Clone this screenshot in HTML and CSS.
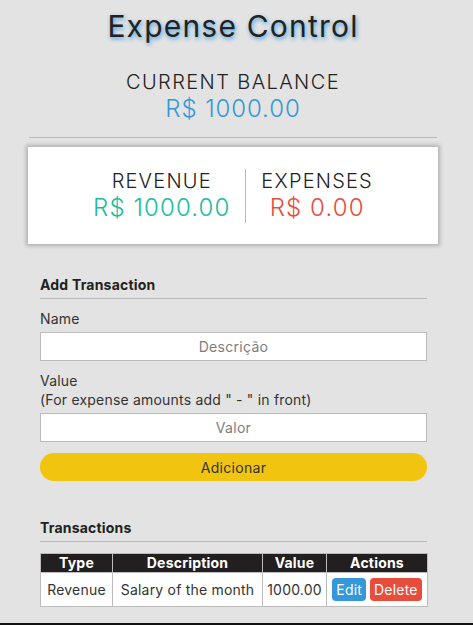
FILE: index.html
```html
<!DOCTYPE html>
<html lang="en">
<head>
<meta charset="utf-8">
<title>Expense Control</title>
<link rel="stylesheet" href="styles.css">
</head>
<body>
<div class="page">
  <h1 class="title">Expense Control</h1>
  <div class="balance">
    <div class="balance-label">CURRENT BALANCE</div>
    <div class="balance-value">R$ 1000.00</div>
  </div>
  <hr class="rule-wide">
  <div class="card">
    <div class="card-col">
      <div class="card-label">REVENUE</div>
      <div class="card-value revenue">R$ 1000.00</div>
    </div>
    <div class="card-col divided">
      <div class="card-label">EXPENSES</div>
      <div class="card-value expense">R$ 0.00</div>
    </div>
  </div>
  <section class="section form-section">
    <h3 class="section-title">Add Transaction</h3>
    <div class="field">
      <label class="field-label">Name</label>
      <input class="field-input" type="text" placeholder="Descrição">
    </div>
    <div class="field">
      <label class="field-label">Value<br>(For expense amounts add " - " in front)</label>
      <input class="field-input" type="text" placeholder="Valor">
    </div>
    <button class="btn-add">Adicionar</button>
  </section>
  <section class="section table-section">
    <h3 class="section-title">Transactions</h3>
    <table class="tx-table">
      <colgroup>
        <col class="c-type"><col class="c-desc"><col class="c-val"><col class="c-act">
      </colgroup>
      <thead>
        <tr><th>Type</th><th>Description</th><th>Value</th><th>Actions</th></tr>
      </thead>
      <tbody>
        <tr>
          <td>Revenue</td>
          <td>Salary of the month</td>
          <td>1000.00</td>
          <td class="actions"><button class="btn-sm edit">Edit</button><button class="btn-sm delete">Delete</button></td>
        </tr>
      </tbody>
    </table>
  </section>
  <div class="bottom-line"></div>
</div>
</body>
</html>
```
FILE: styles.css
```css
* { box-sizing: border-box; }
html, body { margin: 0; padding: 0; }
body {
  background: #e3e3e3;
  font-family: Inter, "Open Sans", sans-serif;
  color: #222;
}
.page {
  width: 466px;
  min-height: 625px;
  display: flex;
  flex-direction: column;
}
.title {
  margin: 6px 0 0;
  font-size: 30px;
  line-height: 40px;
  font-weight: 400;
  text-align: center;
  color: #222;
  letter-spacing: 1.2px;
  text-shadow: 1px 2px 4px rgba(52, 152, 219, 0.9);
}
.balance {
  margin-top: 24px;
  text-align: center;
}
.balance-label {
  font-size: 20px;
  line-height: 24px;
  letter-spacing: 1.4px;
  font-weight: 300;
  color: #222;
}
.balance-value {
  font-size: 24px;
  line-height: 30px;
  color: #3498db;
  font-weight: 300;
  letter-spacing: 0.9px;
}
.rule-wide {
  margin: 13px 29px 0;
  border: 0;
  border-top: 1px solid #b9b9b9;
  height: 0;
}
.card {
  margin: 9px 28px 0;
  background: #fff;
  box-shadow: 0 0 4px 2px rgba(0, 0, 0, 0.22);
  padding: 22px 0 21px;
  display: flex;
  justify-content: center;
}
.card-col {
  padding: 0 15px;
  text-align: center;
}
.card-col.divided { border-left: 1px solid #bbb; }
.card-label {
  font-size: 20px;
  line-height: 24px;
  letter-spacing: 1.2px;
  font-weight: 300;
  color: #222;
}
.card-value {
  font-size: 24px;
  line-height: 30px;
  font-weight: 300;
  letter-spacing: 1.1px;
}
.card-value.revenue { color: #1abc9c; }
.card-value.expense { color: #e74c3c; }
.section {
  margin: 0 39px 0 40px;
}
.form-section { margin-top: 31px; }
.table-section { margin-top: 37px; }
.section-title {
  margin: 0;
  font-size: 14px;
  line-height: 20px;
  font-weight: 700;
  letter-spacing: 0.2px;
  color: #222;
  padding-bottom: 3px;
  border-bottom: 1px solid #b9b9b9;
}
.field { margin-top: 10px; }
.field-label {
  display: block;
  font-size: 14px;
  line-height: 19px;
  letter-spacing: 0.2px;
  color: #333;
}
.field-input {
  display: block;
  width: 100%;
  height: 29px;
  margin-top: 4px;
  border: 1px solid #bbb;
  background: #fff;
  font-family: inherit;
  font-size: 14px;
  letter-spacing: 0.3px;
  text-align: center;
  outline: none;
}
.field-input::placeholder { color: #7d7d7d; }
.btn-add {
  display: block;
  width: 100%;
  height: 28px;
  margin-top: 11px;
  border: 0;
  border-radius: 14px;
  background: #f1c40f;
  color: #333;
  font-family: inherit;
  font-size: 14px;
  letter-spacing: 0.3px;
}
.tx-table {
  margin-top: 11px;
  width: 100%;
  table-layout: fixed;
  border-collapse: collapse;
  font-size: 14px;
  letter-spacing: 0.2px;
}
.c-type { width: 72px; }
.c-desc { width: 150px; }
.c-val { width: 64px; }
.c-act { width: 101px; }
.tx-table th {
  background: #231f20;
  color: #fff;
  font-weight: 700;
  height: 19px;
  padding: 0;
  line-height: 18px;
  border: 1px solid #bbb;
  border-bottom: 0;
}
.tx-table td {
  background: #fff;
  color: #333;
  border: 1px solid #bbb;
  height: 34px;
  padding: 0;
  text-align: center;
  white-space: nowrap;
}
.btn-sm {
  border: 0;
  border-radius: 4px;
  color: #fff;
  font-family: inherit;
  font-size: 14px;
  letter-spacing: 0.2px;
  height: 23px;
  padding: 0 4px;
  margin: 0 2px;
  vertical-align: middle;
}
.btn-sm.edit { background: #3498db; }
.btn-sm.delete { background: #e74c3c; }
.bottom-line {
  margin-top: auto;
  height: 2px;
  background: #111;
  width: 473px;
}
```
